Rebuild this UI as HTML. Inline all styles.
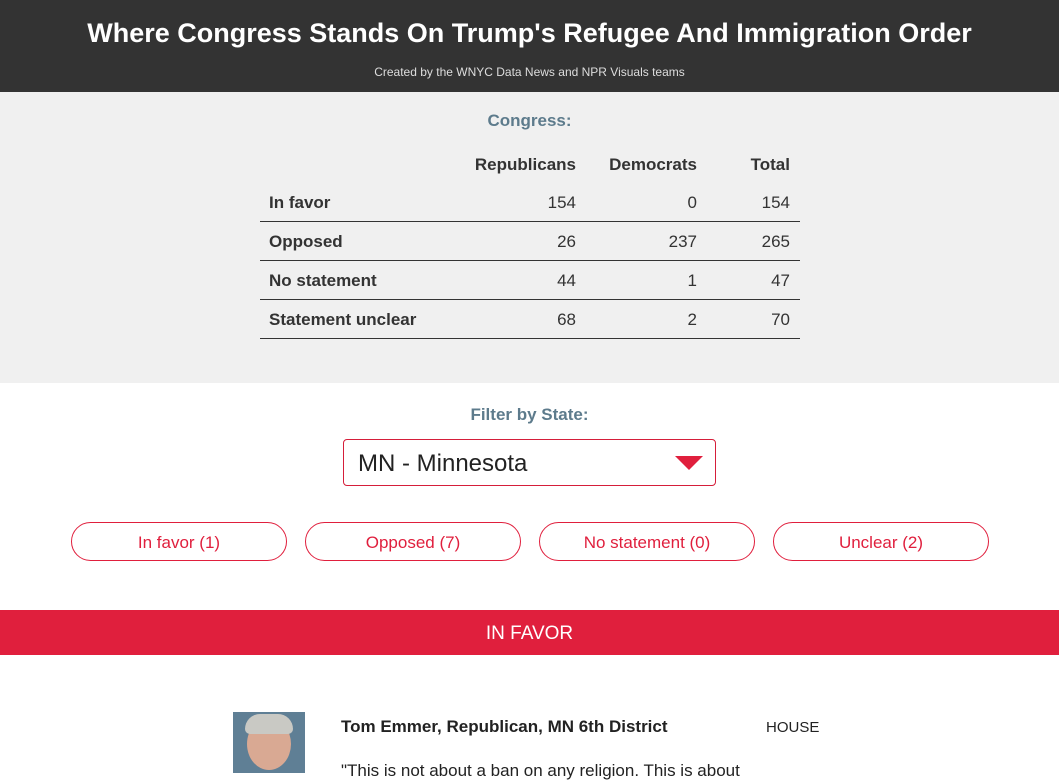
<!DOCTYPE html>
<html><head><style>
*{margin:0;padding:0;box-sizing:border-box}
body{width:1059px;height:773px;overflow:hidden;background:#fff;font-family:"Liberation Sans",sans-serif;color:#333;position:relative}
.a{position:absolute}
.hd{left:0;top:0;width:1059px;height:92px;background:#333}
.t{left:0;width:1059px;text-align:center}
.gray{left:0;top:92px;width:1059px;height:291px;background:#f0f0f0}
.row{left:260px;width:540px;height:39px;border-bottom:1px solid #333;font-size:17px}
.row span{position:absolute;top:10px}
.b{font-weight:bold}
.btn{top:522px;width:216px;height:39px;border:1px solid #e01f3d;border-radius:20px;color:#e01f3d;font-size:17px;text-align:center;line-height:40px}
</style></head><body>
<div class="a hd"></div>
<div class="a t" style="top:18px;color:#fff;font-size:27px;font-weight:bold">Where Congress Stands On Trump's Refugee And Immigration Order</div>
<div class="a t" style="top:65px;color:#ddd;font-size:12px">Created by the WNYC Data News and NPR Visuals teams</div>
<div class="a gray"></div>
<div class="a t b" style="top:111px;color:#5d7b8c;font-size:17px">Congress:</div>
<div class="a b" style="left:260px;top:155px;width:540px;height:30px;font-size:17px">
<span class="a" style="right:224px">Republicans</span><span class="a" style="right:103px">Democrats</span><span class="a" style="right:10px">Total</span></div>
<div class="a row" style="top:183px"><span class="b" style="left:9px">In favor</span><span style="right:224px">154</span><span style="right:103px">0</span><span style="right:10px">154</span></div>
<div class="a row" style="top:222px"><span class="b" style="left:9px">Opposed</span><span style="right:224px">26</span><span style="right:103px">237</span><span style="right:10px">265</span></div>
<div class="a row" style="top:261px"><span class="b" style="left:9px">No statement</span><span style="right:224px">44</span><span style="right:103px">1</span><span style="right:10px">47</span></div>
<div class="a row" style="top:300px"><span class="b" style="left:9px">Statement unclear</span><span style="right:224px">68</span><span style="right:103px">2</span><span style="right:10px">70</span></div>
<div class="a t b" style="top:405px;color:#5d7b8c;font-size:17px">Filter by State:</div>
<div class="a" style="left:343px;top:439px;width:373px;height:47px;border:1px solid #d51e3a;border-radius:4px;background:#fff"></div>
<div class="a" style="left:358px;top:450px;font-size:24px;color:#222">MN - Minnesota</div>
<svg class="a" style="left:675px;top:456px" width="28" height="14"><polygon points="0,0 28,0 14,14" fill="#e01f3d"/></svg>
<div class="a btn" style="left:71px">In favor (1)</div>
<div class="a btn" style="left:305px">Opposed (7)</div>
<div class="a btn" style="left:539px">No statement (0)</div>
<div class="a btn" style="left:773px">Unclear (2)</div>
<div class="a" style="left:0;top:610px;width:1059px;height:45px;background:#e01f3d;color:#fff;font-size:19px;text-align:center;line-height:47px">IN FAVOR</div>
<div class="a" style="left:233px;top:712px;width:72px;height:61px;background:#5f7f95;overflow:hidden">
<div class="a" style="left:14px;top:6px;width:44px;height:52px;border-radius:50%;background:#d9a993"></div>
<div class="a" style="left:12px;top:2px;width:48px;height:20px;border-radius:24px 24px 8px 8px;background:#c9c9c4"></div></div>
<div class="a b" style="left:341px;top:717px;font-size:17px;color:#222">Tom Emmer, Republican, MN 6th District</div>
<div class="a" style="left:766px;top:719px;font-size:15px;color:#222">HOUSE</div>
<div class="a" style="left:341px;top:761px;font-size:17px;color:#222">"This is not about a ban on any religion. This is about</div>
</body></html>
